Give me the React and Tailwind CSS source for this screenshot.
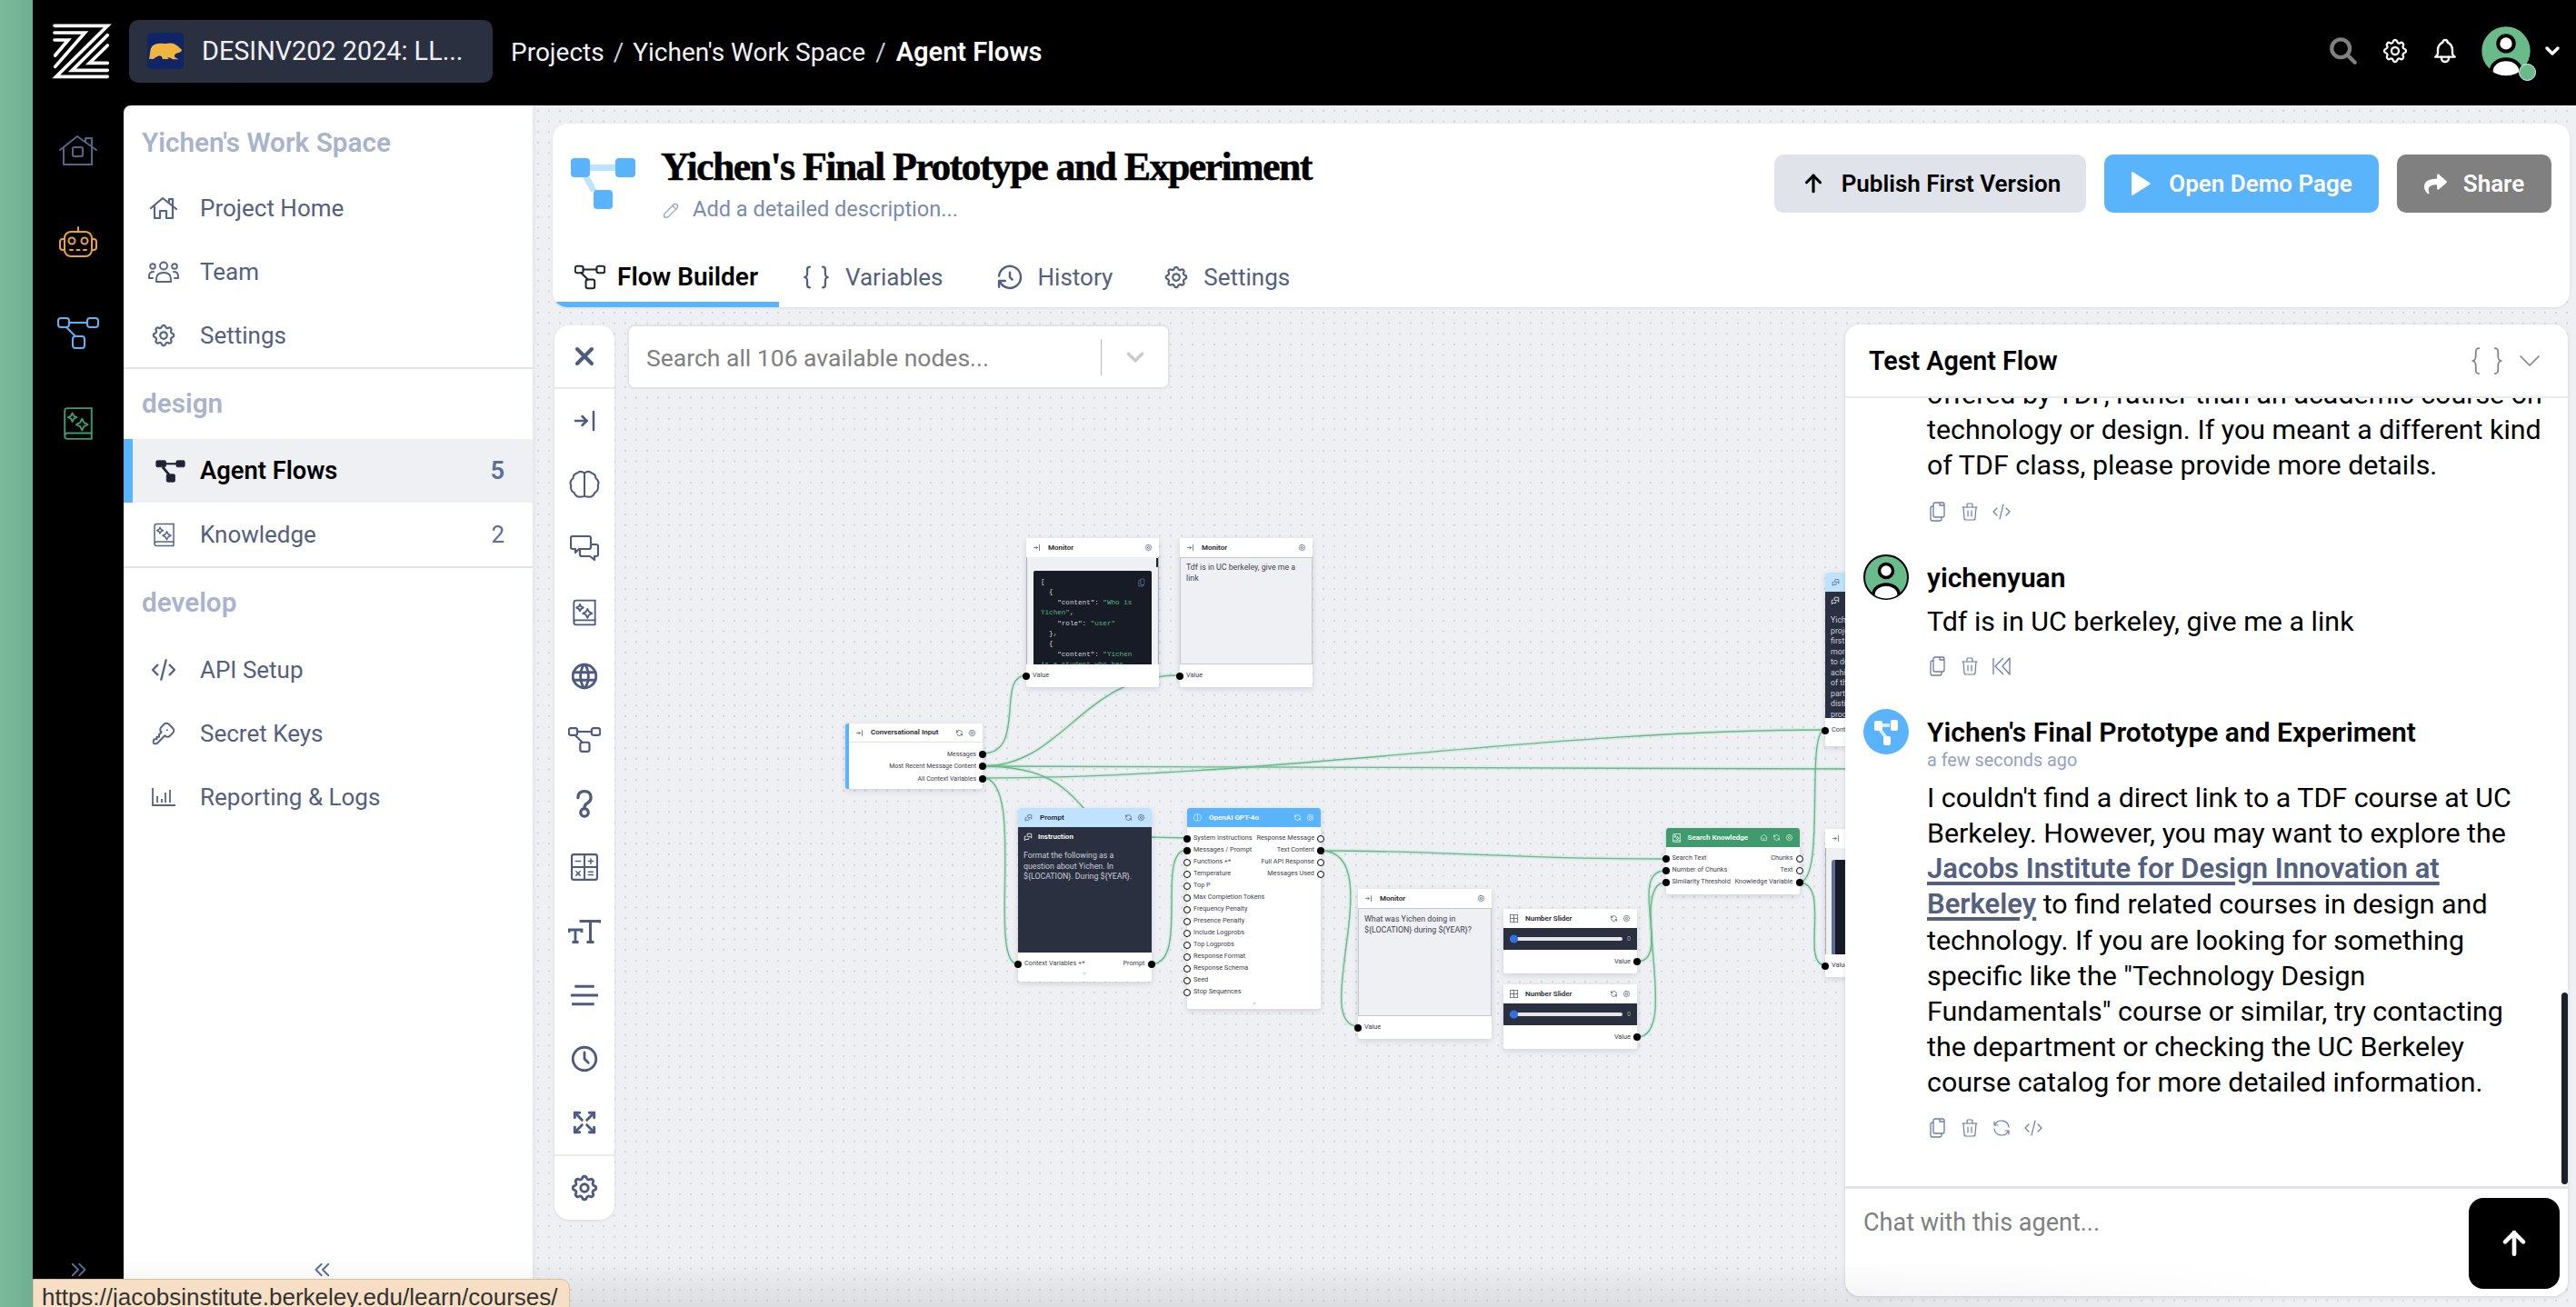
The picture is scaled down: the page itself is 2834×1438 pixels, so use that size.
import React from "react";
import { TbSettings, TbKey, TbCode, TbWorld, TbClock, TbArrowBarToRight, TbMessages, TbSearch, TbBell, TbHistory, TbBraces, TbPencil, TbArrowUp, TbRefresh, TbChevronDown, TbX, TbArrowsMaximize, TbSmartHome, TbTrash, TbChevronsLeft, TbChevronsRight, TbChevronsDown, TbChevronsUp } from "react-icons/tb";
import { FaShare } from "react-icons/fa";

const Logo = () => (
  <svg viewBox="0 0 240 240" className="w-[80px] h-[80px] shrink-0" fill="none" stroke="white" strokeWidth="11" strokeLinecap="round" strokeLinejoin="miter">
    <path d="M30 37H205L35 205H205" />
    <path d="M30 60H130L32 172" />
    <path d="M30 84H75L32 135" />
    <path d="M205 68L88 184H205" />
    <path d="M205 102L145 160H205" />
  </svg>
);
const Bear = () => (
  <svg viewBox="0 0 120 120" className="w-[40px] h-[40px] shrink-0 rounded-[5px] bg-[#0f2566]">
    <path fill="#f0b440" d="M6 86C10 74 8 58 14 48C20 36 40 34 56 36C66 36 78 32 88 36C96 40 104 46 114 56L112 62L104 66L96 68C90 72 88 76 92 82L104 88L84 88C76 82 70 82 66 82L72 87L50 87C50 80 46 76 40 76C32 78 24 84 20 87Z" />
  </svg>
);
const RailHome = () => (
  <svg viewBox="0 0 42 34" className="w-[42px] h-[34px]" fill="none" stroke="#56648a" strokeWidth="2" strokeLinejoin="round" strokeLinecap="round">
    <path d="M1 16L20 1L41 16" /><path d="M5 14V32H36V14" /><path d="M29 7V3H36V14" /><rect x="15" y="13" width="11" height="10" rx="1.5" />
  </svg>
);
const ProjectHome = () => (
  <svg viewBox="0 0 30 26" width="30" height="26" fill="none" stroke="#56648a" strokeWidth="2.200" strokeLinejoin="round" strokeLinecap="round">
    <path d="M1 13L14 2L29 14" /><path d="M5 11V24H11V16H18V24H25V11" /><path d="M21 6V3H25V10" />
  </svg>
);
const TeamIcon = () => (
  <svg viewBox="0 0 34 24" width="34" height="24" fill="none" stroke="#56648a" strokeWidth="1.900" strokeLinejoin="round" strokeLinecap="round">
    <circle cx="17" cy="5.500" r="4" /><circle cx="5" cy="6" r="2.800" /><circle cx="29" cy="6" r="2.800" />
    <path d="M9 23V20Q9 13 17 13Q25 13 25 20V23Z" /><path d="M6 12Q1 12 1 17V19H5" /><path d="M28 12Q33 12 33 17V19H29" />
  </svg>
);
const Robot = () => (
  <svg viewBox="0 0 42 34" className="w-[42px] h-[34px]" fill="none" stroke="#e9a23b" strokeWidth="2" strokeLinejoin="round" strokeLinecap="round">
    <path d="M21 1V6" /><rect x="6" y="6" width="30" height="27" rx="7" /><path d="M6 14H4Q1 14 1 17V23Q1 26 4 26H6" /><path d="M36 14H38Q41 14 41 17V23Q41 26 38 26H36" />
    <circle cx="14" cy="16" r="3.5" /><circle cx="28" cy="16" r="3.5" /><path d="M12 26H15M19.5 26H22.5M27 26H30" />
  </svg>
);
const Flow = ({ color = "#5ab4fb", w = 46, h = 35, sw = 2 }) => (
  <svg viewBox="0 0 46 35" width={w} height={h} fill="none" stroke={color} strokeWidth={sw} strokeLinejoin="round" strokeLinecap="round">
    <rect x="1" y="1" width="12" height="10" rx="3" /><rect x="33" y="1" width="12" height="10" rx="3" /><rect x="17" y="21" width="13" height="13" rx="3" />
    <path d="M13 6H33" /><path d="M10 11L20 21" />
  </svg>
);
const FlowSolid = () => (
  <svg viewBox="0 0 46 35" width="33" height="25" fill="#1f2430" stroke="#1f2430">
    <rect x="1" y="1" width="15" height="10" rx="2" /><rect x="32" y="1" width="13" height="10" rx="2" /><rect x="17" y="22" width="13" height="12" rx="2" />
    <path d="M13 6H33" strokeWidth="3" /><path d="M11 11L21 23" strokeWidth="4" />
  </svg>
);
const Book = ({ color = "#56648a", size = 34, sw = 2 }) => (
  <svg viewBox="0 0 32 36" width={size} height={size} fill="none" stroke={color} strokeWidth={sw} strokeLinejoin="round" strokeLinecap="round">
    <path d="M30 2H5Q2 2 2 5V31Q2 34 5 34H30V28H5Q2 28 2 31" /><path d="M30 2V28" />
    <path d="M10 7L11.5 10L14.5 11.5L11.5 13L10 16L8.500 13L5.5 11.500L8.5 10Z" /><path d="M20 13L22 17L26 19L22 21L20 25L18 21L14 19L18 17Z" />
  </svg>
);
const HeaderLogo = () => (
  <svg viewBox="0 0 71 56" width="71" height="56" className="shrink-0">
    <rect x="21" y="7" width="28" height="7" fill="#bfe3fc" /><path d="M13 21L21 21L29 36L22 37Z" fill="#bfe3fc" />
    <rect x="0" y="0" width="21" height="21" rx="4" fill="#5ab4fb" /><rect x="49" y="0" width="22" height="21" rx="4" fill="#5ab4fb" /><rect x="25" y="35" width="21" height="21" rx="4" fill="#5ab4fb" />
  </svg>
);
const Avatar = ({ w = 50, h = 50 }) => (
  <svg viewBox="0 0 50 50" width={w} height={h} className="shrink-0">
    <defs><clipPath id="av"><circle cx="25" cy="25" r="23.500" /></clipPath></defs>
    <circle cx="25" cy="25" r="24" fill="#69bb8a" stroke="black" strokeWidth="2" />
    <g clipPath="url(#av)">
      <ellipse cx="25" cy="44" rx="14" ry="11" fill="white" stroke="black" strokeWidth="3.500" />
      <circle cx="25" cy="18" r="7.500" fill="white" stroke="black" strokeWidth="3.500" />
    </g>
  </svg>
);
const BotAvatar = () => (
  <div className="w-[50px] h-[50px] shrink-0 rounded-full bg-[#5ab4fb] flex items-center justify-center">
    <svg viewBox="0 0 30 30" width="30" height="30">
      <rect x="9" y="6" width="10" height="4" fill="#d5ecfd" /><path d="M7 14L13 22L16 20L11 13Z" fill="#d5ecfd" />
      <rect x="2" y="3" width="9" height="11" rx="2" fill="white" /><rect x="20" y="2" width="8" height="12" rx="2" fill="white" /><rect x="12" y="20" width="8" height="10" rx="2" fill="white" />
    </svg>
  </div>
);
const CopyIcon = () => (
  <svg viewBox="0 0 20 24" width="20" height="24" fill="none" stroke="#6c7ca6" strokeWidth="1.300" strokeLinejoin="round">
    <path d="M7 2H15Q17 2 17 4V16Q17 18 15 18H7Q5 18 5 16V4Q5 2 7 2Z" /><path d="M5 6H4Q2 6 2 8V20Q2 22 4 22H12Q14 22 14 20V18" /><path d="M12 2V5H17" />
  </svg>
);
const Reverse = () => (
  <svg viewBox="0 0 24 24" width="24" height="24" fill="none" stroke="#6c7ca6" strokeWidth="1.300" strokeLinejoin="round">
    <path d="M3 3V21" /><path d="M14 3L5 12L14 21" /><path d="M21 3V21L13 12Z" />
  </svg>
);

const Question = () => (
  <svg viewBox="0 0 24 24" width="34" height="34" fill="none" stroke="#4d5b80" strokeWidth="2.300" strokeLinecap="round" strokeLinejoin="round">
    <path d="M7 7.500Q7 2.500 12 2.500Q17 2.500 17 7.500Q17 10 14 12Q12 13 12 15.500" /><circle cx="12" cy="19" r="3" />
  </svg>
);
const Calc = () => (
  <svg viewBox="0 0 28 28" width="30" height="30" fill="none" stroke="#4d5b80" strokeWidth="2" strokeLinecap="round">
    <rect x="1" y="1" width="26" height="26" rx="2" /><path d="M14 1V27M1 14H27" strokeWidth="1.800" />
    <path d="M5 8H10M18 8H23M20.500 5.500V10.500M5.500 18.500L9.500 22.500M9.500 18.500L5.500 22.500M18 19H23M18 22H23" strokeWidth="1.400" />
  </svg>
);
const TextSize = () => (
  <svg viewBox="0 0 36 26" width="36" height="26" fill="none" stroke="#4d5b80" strokeWidth="2.800">
    <path d="M14 3V1.500H35V3.500" /><path d="M24.500 2V25M20.500 24.500H28.500" strokeWidth="3" /><path d="M1 14V11H15V14" /><path d="M8 11V25M4.500 24.500H11.500" />
  </svg>
);
const AlignLines = () => (
  <svg viewBox="0 0 28 22" width="30" height="24" stroke="#4d5b80" strokeWidth="2.800">
    <path d="M4 2H24M0 11H28M1 20H24" />
  </svg>
);
const Brain = ({ size = 34, color = "#4d5b80", sw = 1.800 }) => (
  <svg viewBox="0 0 30 28" width={size} height={size} fill="none" stroke={color} strokeWidth={sw} strokeLinejoin="round">
    <path d="M15 2V26" /><path d="M15 3Q11 0 8 3Q4 4 4 8Q0 11 2 15Q1 20 5 22Q7 27 12 26Q14 26 15 25Q16 26 18 26Q23 27 25 22Q29 20 28 15Q30 11 26 8Q26 4 22 3Q19 0 15 3Z" />
  </svg>
);
const TwoChats = () => (
  <svg viewBox="0 0 32 28" width="32" height="28" fill="none" stroke="#4d5b80" strokeWidth="2.200" strokeLinejoin="round">
    <path d="M3 1H21Q23 1 23 3V13Q23 15 21 15H10L6 19V15H3Q1 15 1 13V3Q1 1 3 1Z" /><path d="M23 10H29Q31 10 31 12V21Q31 23 29 23H27V27L22 23H13Q11 23 11 21V15" />
  </svg>
);
const ReportIcon = () => (
  <svg viewBox="0 0 26 22" width="26" height="22" fill="none" stroke="#56648a" strokeWidth="1.800">
    <path d="M1 1V20H26" /><path d="M6 10V17M11 13V17M15 6V17M20 3V17" />
  </svg>
);
const Pencil = () => (<TbPencil size={23} color="#94a2c2" strokeWidth={1.300} />);

const nav1 = "h-[70px] flex items-center text-[26px] text-[#54607f] shrink-0";
const NavItem = ({ icon, label, count, active }) => (
  <div className={active ? "h-[70px] flex items-center text-[27.300px] bg-[#eff0f4] text-black font-semibold border-l-[10px] border-[#5ab4fb] shrink-0" : nav1}>
    <div className={active ? "w-[74px] pl-[8px] flex items-center justify-center" : "w-[84px] pl-[4px] flex items-center justify-center"}>{icon}</div>
    <span className="whitespace-nowrap">{label}</span>
    {count ? <span className={active ? "ml-auto pr-[31px] text-[#5c6d9a] font-semibold" : "ml-auto pr-[31px] text-[#5c6d9a]"}>{count}</span> : null}
  </div>
);
const SectionHead = ({ children, first }) => (
  <div className={first ? "h-[78px] pl-[20px] pt-[4px] flex items-center text-[29.700px] font-semibold text-[#a9b4cc] shrink-0 whitespace-nowrap" : "h-[77px] pl-[20px] flex items-center text-[29.700px] font-semibold text-[#a9b4cc] shrink-0"}>{children}</div>
);
const Divider = () => <div className="h-[2px] bg-[#e0e3ea] shrink-0" />;

const Tab = ({ icon, label, active, className }) => (
  <div className={`flex items-center h-[64px] whitespace-nowrap ${active ? "gap-[13px] text-[28px] font-semibold text-black" : "gap-[15px] text-[26px] text-[#54607f]"} ${className}`}>
    {icon}<span>{label}</span>
  </div>
);

const Dot = ({ hollow, side }) => (
  <span className={`absolute top-1/2 -translate-y-1/2 w-[8px] h-[8px] rounded-full ${side === "l" ? "-left-[4px]" : "-right-[4px]"} ${hollow ? "bg-white border border-black" : "bg-black"}`} />
);
const Row = ({ l, r, lh, rh }) => (
  <div className="relative h-[13px] flex items-center justify-between px-[7px] text-[7.300px] text-[#3d4250] whitespace-nowrap">
    {l ? <Dot side="l" hollow={lh} /> : null}<span>{l}</span><span>{r}</span>{r ? <Dot side="r" hollow={rh} /> : null}
  </div>
);
const NodeHead = ({ icon, title, actions = 1, className = "bg-white text-[#1f2430]", iconColor = "#4d5b80" }) => (
  <div className={`h-[21px] flex items-center gap-[6px] px-[7px] shrink-0 font-semibold text-[8px] whitespace-nowrap ${className}`}>
    <span className="w-[9px] flex items-center">{icon}</span>
    <span className="ml-[2px]">{title}</span>
    <span className="ml-auto flex items-center gap-[5px]">
      {actions > 2 ? <TbSmartHome size={9} color={iconColor} /> : null}
      {actions > 1 ? <TbRefresh size={9} color={iconColor} /> : null}
      <TbSettings size={9} color={iconColor} />
    </span>
  </div>
);
const InIcon = () => <TbArrowBarToRight size={9} color="#4d5b80" />;
const nodeBase = "absolute rounded-[3px] bg-white shadow-[0_2px_6px_rgba(40,50,80,0.16)] flex flex-col";
const Kw = ({ children }) => <span className="text-[#5ab57e]">{children}</span>;

const CodeBlock = () => (
  <div className="relative flex-1 mx-[7px] mt-[15px] rounded-t-[2px] bg-[#161b26] px-[8px] pt-[7px] overflow-hidden [font-family:'Liberation_Mono',monospace] text-[7.600px] leading-[11.400px] text-[#d4d6dc] whitespace-pre">
    <div className="absolute right-[7px] top-[8px]"><svg viewBox="0 0 20 24" width="8" height="10" fill="none" stroke="#5c6d9a" strokeWidth="2"><path d="M7 2H17V18H7Z" /><path d="M5 6H2V22H14V18" /></svg></div>
    {"[\n  {\n    \"content\": "}<Kw>{"\"Who is\nYichen\""}</Kw>{",\n    \"role\": "}<Kw>{"\"user\""}</Kw>{"\n  },\n  {\n    \"content\": "}<Kw>{"\"Yichen\nis a student who has"}</Kw>
  </div>
);

const Slider = () => (
  <div className="h-[24px] bg-[#2a3040] flex items-center px-[7px] gap-[5px] shrink-0">
    <div className="relative flex-1 h-[4px] rounded-full bg-[#e6e6e8]">
      <span className="absolute left-0 top-1/2 -translate-y-1/2 w-[9px] h-[9px] rounded-full bg-[#2f6fe8]" />
    </div>
    <span className="text-[7.300px] text-[#9aa0ad]">0</span>
  </div>
);

const E = ({ d }) => (
  <g fill="none" stroke="#65bb88">
    <path d={d} strokeWidth="4.500" opacity="0.13" />
    <path d={d} strokeWidth="1.400" />
  </g>
);

const gpt = [
  ["System Instructions", "Response Message", false, true],
  ["Messages / Prompt", "Text Content", false, false],
  ["Functions +*", "Full API Response", true, true],
  ["Temperature", "Messages Used", true, true],
  ["Top P"], ["Max Completion Tokens"], ["Frequency Penalty"], ["Presence Penalty"], ["Include Logprobs"], ["Top Logprobs"], ["Response Format"], ["Response Schema"], ["Seed"], ["Stop Sequences"],
];

const tools = [
  <TbArrowBarToRight size={30} color="#4d5b80" strokeWidth={2} />,
  <Brain />,
  <TwoChats />,
  <Book color="#4d5b80" size={30} sw={2.200} />,
  <TbWorld size={34} color="#4d5b80" strokeWidth={2} />,
  <Flow color="#4d5b80" w={36} h={28} sw={2.800} />,
  <Question />,
  <Calc />,
  <TextSize />,
  <AlignLines />,
  <TbClock size={34} color="#4d5b80" strokeWidth={2} />,
  <TbArrowsMaximize size={32} color="#4d5b80" strokeWidth={2.200} />,
];

const ChatLine = ({ children }) => <div className="whitespace-nowrap h-[39.200px] leading-[39.200px]">{children}</div>;
const Actions = ({ children }) => <div className="h-[30px] flex items-center gap-[11px] text-[#6c7ca6]">{children}</div>;
const Act = ({ children }) => <span className="w-[24px] flex items-center justify-center">{children}</span>;
const Link = ({ children }) => <span className="text-[31px] font-semibold text-[#54607f] underline decoration-[#54607f] decoration-[4px] underline-offset-[4px]">{children}</span>;

export default function App() {
  return (
    <div className="relative w-[2834px] h-[1438px] flex overflow-hidden bg-black [font-family:'Roboto',sans-serif]">
      <div className="w-[36px] shrink-0 bg-gradient-to-r from-[#7cba9c] to-[#6fae90]" />
      <div className="flex-1 flex flex-col min-w-0">
        {/* top bar */}
        <header className="h-[116px] shrink-0 bg-black flex items-center pl-[14px] pr-[14px] pb-[4px] text-white text-[28px]">
          <Logo />
          <div className="ml-[12px] w-[400px] h-[69px] rounded-[10px] bg-[#2a3040] flex items-center pl-[20px] gap-[20px]">
            <Bear />
            <span className="pt-[2px] text-[28.800px] whitespace-nowrap text-[#eef0f4]">DESINV202 2024: LL...</span>
          </div>
          <div className="ml-[20px] pt-[3px] flex items-center whitespace-nowrap text-[#f2f3f6]">
            <span>Projects</span><span className="mx-[10px] text-[#c9ced9]">/</span><span>Yichen's Work Space</span><span className="mx-[11px] text-[#c9ced9]">/</span><span className="text-[29px] font-semibold text-white">Agent Flows</span>
          </div>
          <div className="ml-auto flex items-center">
            <TbSearch size={34} color="#808080" strokeWidth={3} />
            <span className="ml-[24px]"><TbSettings size={32} color="white" strokeWidth={1.700} /></span>
            <span className="ml-[23px]"><TbBell size={32} color="white" strokeWidth={1.800} /></span>
            <div className="relative ml-[22px]">
              <Avatar w={58} h={58} />
              <span className="absolute -right-[4px] bottom-[-4px] w-[19px] h-[19px] rounded-full bg-[#69bb8a] border border-[#e8f3ec]" />
            </div>
            <span className="ml-[10px]"><TbChevronDown size={24} color="white" strokeWidth={3.500} /></span>
          </div>
        </header>

        <div className="flex-1 flex min-h-0">
          {/* rail */}
          <nav className="relative w-[100px] shrink-0 bg-black flex flex-col items-center">
            <div className="h-[100px] w-full flex items-center justify-center"><RailHome /></div>
            <div className="h-[100px] w-full flex items-center justify-center"><Robot /></div>
            <div className="h-[100px] w-full flex items-center justify-center"><Flow /></div>
            <div className="h-[100px] w-full flex items-center justify-center"><Book color="#3f9b6d" size={38} sw={1.800} /></div>
            <div className="mt-auto mb-[26px]"><TbChevronsRight size={30} color="#5c6d9a" strokeWidth={1.500} /></div>
          </nav>

          {/* sidebar */}
          <aside className="relative w-[450px] shrink-0 bg-white rounded-tl-[8px] flex flex-col shadow-[2px_0_4px_rgba(40,50,80,0.06)] z-10">
            <SectionHead first>Yichen's Work Space</SectionHead>
            <NavItem icon={<ProjectHome />} label="Project Home" />
            <NavItem icon={<TeamIcon />} label="Team" />
            <NavItem icon={<TbSettings size={30} color="#56648a" strokeWidth={1.800} />} label="Settings" />
            <Divider />
            <SectionHead>design</SectionHead>
            <NavItem active icon={<FlowSolid />} label="Agent Flows" count="5" />
            <NavItem icon={<Book size={27} sw={2} />} label="Knowledge" count="2" />
            <Divider />
            <SectionHead>develop</SectionHead>
            <NavItem icon={<TbCode size={32} color="#56648a" strokeWidth={1.800} />} label="API Setup" />
            <NavItem icon={<TbKey size={30} color="#56648a" strokeWidth={1.600} />} label="Secret Keys" />
            <NavItem icon={<ReportIcon />} label="Reporting & Logs" />
            <div className="mt-auto mb-[26px] self-center pr-[12px]"><TbChevronsLeft size={30} color="#5c6d9a" strokeWidth={1.500} /></div>
          </aside>

          {/* main */}
          <main className="relative flex-1 min-w-0 bg-[#eff0f4] bg-[radial-gradient(#d3d6e0_0.8px,transparent_0.9px)] bg-[length:12px_11.700px]">
            {/* canvas */}
            <div className="absolute inset-0">
              <svg className="absolute left-0 top-0" width="2248" height="1322" viewBox="586 116 2248 1322">
                <E d="M1081 829C1130 829 1095 743 1129 743" />
                <E d="M1081 843C1170 843 1190 743 1297 743" />
                <E d="M1081 843C1500 843 1800 846 2030 846" />
                <E d="M1081 856C1400 856 1700 803 2008 803" />
                <E d="M1081 843C1170 843 1180 880 1220 920L1306 922" />
                <E d="M1081 856C1130 856 1085 1061 1120 1061" />
                <E d="M1266 1061C1310 1061 1270 935 1306 935" />
                <E d="M1453 936C1530 936 1440 1129 1494 1129" />
                <E d="M1453 936C1600 936 1650 945 1832 945" />
                <E d="M1801 1058C1840 1058 1790 958 1832 958" />
                <E d="M1801 1141C1850 1141 1790 971 1832 971" />
                <E d="M1979 971C2010 971 1985 803 2008 803" />
                <E d="M1979 971C2015 971 1980 1062 2008 1062" />
              </svg>

              {/* Monitor 1 */}
              <div className={`${nodeBase} left-[543px] top-[476px] w-[146px] h-[164px]`}>
                <NodeHead icon={<InIcon />} title="Monitor" />
                <div className="relative flex-1 min-h-0 flex flex-col bg-[#eff0f4] border-x border-[#a9adb6] overflow-hidden">
                  <span className="absolute right-0 top-[1px] w-[2px] h-[10px] bg-[#1f2430]" />
                  <CodeBlock />
                </div>
                <div className="relative h-[25px] flex items-center px-[7px] text-[7.300px] text-[#3d4250] shrink-0"><Dot side="l" /><span>Value</span></div>
              </div>
              {/* Monitor 2 */}
              <div className={`${nodeBase} left-[712px] top-[476px] w-[146px] h-[164px]`}>
                <NodeHead icon={<InIcon />} title="Monitor" />
                <div className="flex-1 min-h-0 bg-[#eff0f4] border border-[#c5c8d0] px-[6px] py-[5px] text-[8.800px] leading-[11.500px] text-[#3d4250]"><div className="whitespace-nowrap">Tdf is in UC berkeley, give me a</div><div>link</div></div>
                <div className="relative h-[25px] flex items-center px-[7px] text-[7.300px] text-[#3d4250] shrink-0"><Dot side="l" /><span>Value</span></div>
              </div>
              {/* Conversational */}
              <div className={`${nodeBase} left-[344px] top-[680px] w-[151px] h-[72px] border-l-[4px] border-[#5ab4fb]`}>
                <NodeHead icon={<InIcon />} title="Conversational Input" actions={2} className="bg-white text-[#1f2430] border-b border-[#e0e3ea]" />
                <div className="pt-[6px] flex flex-col">
                  {["Messages", "Most Recent Message Content", "All Context Variables"].map((t) => (
                    <div key={t} className="relative h-[13.500px] flex items-center justify-end px-[7px] text-[7px] text-[#3d4250] whitespace-nowrap">{t}<Dot side="r" /></div>
                  ))}
                </div>
              </div>
              {/* Prompt */}
              <div className={`${nodeBase} left-[534px] top-[773px] w-[146.500px] h-[191px]`}>
                <NodeHead icon={<TbMessages size={10} color="#4d5b80" />} title="Prompt" actions={2} className="bg-[#bfe3fc] text-[#1f2430] rounded-t-[3px]" />
                <div className="h-[138px] bg-[#2a3040] px-[6px] pt-[5px] text-[8.800px] leading-[11.600px] text-[#c9cdd6] shrink-0">
                  <div className="flex items-center gap-[4px] font-semibold text-white text-[8px] h-[12px] mb-[9px]"><TbMessages size={10} color="white" /><span className="ml-[2px]">Instruction</span></div>
                  <div>Format the following as a</div><div>question about Yichen. In</div><div className="whitespace-nowrap">{"${LOCATION}. During ${YEAR}."}</div>
                </div>
                <div className="pt-[6px]"><Row l="Context Variables +*" r="Prompt" /></div>
                <div className="flex justify-center mt-[1px]"><TbChevronsDown size={6} color="#94a2c2" /></div>
              </div>
              {/* GPT */}
              <div className={`${nodeBase} left-[720px] top-[773px] w-[147px] h-[221px]`}>
                <NodeHead icon={<Brain size={9} color="white" sw={2} />} title="OpenAI GPT-4o" actions={2} iconColor="#e6f3fe" className="bg-[#5ab4fb] text-white rounded-t-[3px]" />
                <div className="pt-[6px] flex flex-col">
                  {gpt.map((g) => (<Row key={g[0]} l={g[0]} r={g[1]} lh={g[2] !== false} rh={g[3]} />))}
                </div>
                <div className="flex justify-center mt-[3px]"><TbChevronsUp size={6} color="#94a2c2" /></div>
              </div>
              {/* Monitor 3 */}
              <div className={`${nodeBase} left-[908px] top-[862px] w-[147px] h-[165px]`}>
                <NodeHead icon={<InIcon />} title="Monitor" />
                <div className="flex-1 min-h-0 bg-[#eff0f4] border border-[#c5c8d0] px-[6px] py-[5px] text-[8.800px] leading-[12px] text-[#3d4250]"><div>What was Yichen doing in</div><div className="whitespace-nowrap">{"${LOCATION} during ${YEAR}?"}</div></div>
                <div className="relative h-[25px] flex items-center px-[7px] text-[7.300px] text-[#3d4250] shrink-0"><Dot side="l" /><span>Value</span></div>
              </div>
              {/* Sliders */}
              <div className={`${nodeBase} left-[1068px] top-[884px] w-[147px] h-[71px]`}>
                <NodeHead icon={<Calc2 />} title="Number Slider" actions={2} />
                <Slider />
                <div className="relative flex-1 flex items-center justify-end px-[7px] text-[7.300px] text-[#3d4250]">Value<Dot side="r" /></div>
              </div>
              <div className={`${nodeBase} left-[1068px] top-[967px] w-[147px] h-[71px]`}>
                <NodeHead icon={<Calc2 />} title="Number Slider" actions={2} />
                <Slider />
                <div className="relative flex-1 flex items-center justify-end px-[7px] text-[7.300px] text-[#3d4250]">Value<Dot side="r" /></div>
              </div>
              {/* Search Knowledge */}
              <div className={`${nodeBase} left-[1246.500px] top-[795px] w-[147px] h-[73px]`}>
                <NodeHead icon={<Book color="white" size={10} sw={2.500} />} title="Search Knowledge" actions={3} iconColor="#d7ecdf" className="bg-[#3f9b6d] text-white rounded-t-[3px]" />
                <div className="pt-[6px] flex flex-col">
                  <Row l="Search Text" r="Chunks" rh />
                  <Row l="Number of Chunks" r="Text" rh />
                  <Row l="Similarity Threshold" r="Knowledge Variable" />
                </div>
              </div>
              {/* clipped prompt */}
              <div className={`${nodeBase} left-[1422px] top-[514px] w-[146px] h-[191px]`}>
                <NodeHead icon={<TbMessages size={10} color="#4d5b80" />} title="Prompt" actions={2} className="bg-[#bfe3fc] text-[#1f2430] rounded-t-[3px]" />
                <div className="h-[139px] bg-[#2a3040] px-[6px] pt-[5px] text-[8.800px] leading-[11.500px] text-[#c9cdd6] shrink-0 overflow-hidden">
                  <div className="h-[12px] mb-[9px]"><TbMessages size={10} color="white" /></div>
                  <div>Yichen</div><div>project</div><div>first</div><div>more</div><div>to do</div><div>achieve</div><div>of the</div><div>part</div><div>distinct</div><div>process</div>
                </div>
                <div className="pt-[7px]"><Row l="Context Variables +*" /></div>
              </div>
              {/* clipped monitor */}
              <div className={`${nodeBase} left-[1422px] top-[796px] w-[146px] h-[163px]`}>
                <NodeHead icon={<InIcon />} title="Monitor" />
                <div className="relative flex-1 min-h-0 flex flex-col bg-[#eff0f4] border-x border-[#a9adb6] overflow-hidden">
                  <div className="flex-1 mx-[6px] mt-[13px] rounded-tl-[3px] bg-[#161b26] border-l-[4px] border-[#5c6d9a]" />
                </div>
                <div className="relative h-[25px] flex items-center px-[7px] text-[7.300px] text-[#3d4250] shrink-0"><Dot side="l" /><span>Value</span></div>
              </div>
            </div>

            {/* header card */}
            <section className="relative z-10 mt-[20px] ml-[22px] mr-[7px] h-[202px] rounded-[16px] bg-white overflow-hidden shadow-[0_1px_3px_rgba(40,50,80,0.1)]">
              <div className="h-[138px] flex items-start">
                <div className="ml-[20px] mt-[38px]"><HeaderLogo /></div>
                <div className="ml-[28px] mt-[23px]">
                  <h1 className="h-[50px] leading-[50px] text-[44px] tracking-[-1.640px] font-bold text-black whitespace-nowrap [-webkit-text-stroke:0.5px_black] [font-family:'Liberation_Serif',serif]">Yichen's Final Prototype and Experiment</h1>
                  <div className="mt-[7px] h-[30px] flex items-center gap-[12px] text-[23.600px] text-[#7b8bb0] whitespace-nowrap"><Pencil /><span>Add a detailed description...</span></div>
                </div>
                <div className="ml-auto mr-[20px] mt-[34px] flex items-center gap-[20px] text-[26px] font-semibold">
                  <div className="w-[343px] h-[64px] rounded-[10px] bg-[#e0e3ea] flex items-center gap-[16px] justify-center text-black whitespace-nowrap"><TbArrowUp size={30} strokeWidth={2.500} /><span>Publish First Version</span></div>
                  <div className="w-[302px] h-[64px] rounded-[10px] bg-[#5ab4fb] flex items-center gap-[20px] justify-center text-white whitespace-nowrap">
                    <svg viewBox="0 0 22 26" width="22" height="26" fill="white"><path d="M1 1Q1 0 2 0L21 12Q22 13 21 14L2 26Q1 26 1 25Z" /></svg><span>Open Demo Page</span>
                  </div>
                  <div className="w-[170px] h-[64px] rounded-[10px] bg-[#808080] flex items-center gap-[18px] justify-center text-white whitespace-nowrap"><FaShare size={25} /><span>Share</span></div>
                </div>
              </div>
              <div className="flex items-center -mt-[1px]">
                <Tab active className="w-[249px] pl-[24px]" icon={<Flow color="#1f2430" w={34} h={28} sw={2.800} />} label="Flow Builder" />
                <Tab className="ml-[24px]" icon={<TbBraces size={34} color="#54607f" strokeWidth={1.600} />} label="Variables" />
                <Tab className="ml-[57px]" icon={<TbHistory size={32} color="#54607f" strokeWidth={1.800} />} label="History" />
                <Tab className="ml-[55px]" icon={<TbSettings size={30} color="#54607f" strokeWidth={1.800} />} label="Settings" />
              </div>
              <div className="absolute left-0 bottom-0 w-[249px] h-[6px] bg-[#5ab4fb]" />
            </section>

            {/* toolbar */}
            <div className="absolute z-10 left-[24px] top-[242px] w-[66px] h-[984px] rounded-[16px] bg-white shadow-[0_1px_3px_rgba(40,50,80,0.12)] flex flex-col items-center">
              <div className="w-full h-[70px] flex items-center justify-center border-b-2 border-[#e8eaef] shrink-0"><TbX size={32} color="#4d5b80" strokeWidth={3} /></div>
              {tools.map((t, i) => (<div key={i} className="w-full h-[70.200px] flex items-center justify-center shrink-0">{t}</div>))}
              <div className="w-full flex-1 flex items-center justify-center border-t-2 border-[#e8eaef]"><TbSettings size={34} color="#4d5b80" strokeWidth={2} /></div>
            </div>

            {/* search */}
            <div className="absolute z-10 left-[104px] top-[241px] w-[597px] h-[71px] rounded-[8px] bg-white border-2 border-[#e0e3ea] flex items-center pl-[19px] text-[26.500px] text-[#808080]">
              <span className="pt-[3px] whitespace-nowrap">Search all 106 available nodes...</span>
              <span className="ml-auto w-[1px] h-[40px] bg-[#b8b8b8]" />
              <span className="w-[73px] flex justify-center"><TbChevronDown size={30} color="#cccccc" strokeWidth={3} /></span>
            </div>

            {/* chat */}
            <section className="absolute z-20 left-[1444px] top-[241px] w-[795px] h-[1069px] rounded-[16px] bg-white flex flex-col overflow-hidden shadow-[0_1px_4px_rgba(40,50,80,0.15)]">
              <div className="h-[81px] shrink-0 flex items-center pl-[26px] pr-[22px] border-b-2 border-[#e8eaef] text-[28.700px] font-semibold text-black">
                <span className="pt-[3px]">Test Agent Flow</span>
                <span className="ml-auto flex items-center gap-[6px]"><TbBraces size={42} color="#808080" strokeWidth={1} /><TbChevronDown size={40} color="#808080" strokeWidth={1} /></span>
              </div>
              <div className="relative flex-1 min-h-0 overflow-hidden text-[30.400px] text-black">
                <div className="pl-[90px] -mt-[24px]">
                  <ChatLine>offered by TDF, rather than an academic course on</ChatLine>
                  <ChatLine>technology or design. If you meant a different kind</ChatLine>
                  <ChatLine>of TDF class, please provide more details.</ChatLine>
                  <div className="mt-[16px]"><Actions><Act><CopyIcon /></Act><Act><TbTrash size={24} strokeWidth={1.200} /></Act><Act><TbCode size={24} strokeWidth={1.200} /></Act></Actions></div>
                </div>
                <div className="mt-[32px] flex pl-[20px] gap-[20px]">
                  <Avatar />
                  <div>
                    <div className="pt-[11px] h-[41px] leading-[30px] text-[30px] font-semibold whitespace-nowrap">yichenyuan</div>
                    <div className="mt-[13px]"><ChatLine>Tdf is in UC berkeley, give me a link</ChatLine></div>
                    <div className="mt-[15px]"><Actions><Act><CopyIcon /></Act><Act><TbTrash size={24} strokeWidth={1.200} /></Act><Act><Reverse /></Act></Actions></div>
                  </div>
                </div>
                <div className="mt-[32px] flex pl-[20px] gap-[20px]">
                  <BotAvatar />
                  <div>
                    <div className="pt-[11px] h-[41px] leading-[30px] text-[30px] font-semibold whitespace-nowrap">Yichen's Final Prototype and Experiment</div>
                    <div className="mt-[4px] h-[24px] leading-[24px] text-[19.800px] text-[#94a2c2] whitespace-nowrap">a few seconds ago</div>
                    <div className="mt-[9px]">
                      <ChatLine>I couldn't find a direct link to a TDF course at UC</ChatLine>
                      <ChatLine>Berkeley. However, you may want to explore the</ChatLine>
                      <ChatLine><Link>Jacobs Institute for Design Innovation at</Link></ChatLine>
                      <ChatLine><Link>Berkeley</Link> to find related courses in design and</ChatLine>
                      <ChatLine>technology. If you are looking for something</ChatLine>
                      <ChatLine>specific like the "Technology Design</ChatLine>
                      <ChatLine>Fundamentals" course or similar, try contacting</ChatLine>
                      <ChatLine>the department or checking the UC Berkeley</ChatLine>
                      <ChatLine>course catalog for more detailed information.</ChatLine>
                    </div>
                    <div className="mt-[16px]"><Actions><Act><CopyIcon /></Act><Act><TbTrash size={24} strokeWidth={1.200} /></Act><Act><TbRefresh size={24} strokeWidth={1.200} /></Act><Act><TbCode size={24} strokeWidth={1.200} /></Act></Actions></div>
                  </div>
                </div>
                <div className="absolute right-0 bottom-[2px] w-[7px] h-[211px] rounded-full bg-[#1a1f2a]" />
              </div>
              <div className="h-[121px] shrink-0 border-t-[3px] border-[#e0e3ea] flex items-start pl-[20px] pr-[9px] pt-[10px]">
                <span className="mt-[7px] text-[27px] text-[#808080] whitespace-nowrap">Chat with this agent...</span>
                <div className="ml-auto w-[100px] h-[100px] rounded-[16px] bg-black flex items-center justify-center"><TbArrowUp size={40} color="white" strokeWidth={2.800} /></div>
              </div>
            </section>
          </main>
        </div>
      </div>

      {/* page-bottom shade */}
      <div className="absolute z-30 left-[36px] bottom-0 w-[2500px] h-[52px] pointer-events-none bg-gradient-to-t from-[#00000014] to-transparent [mask-image:linear-gradient(to_right,black_70%,transparent)]" />
      {/* link status tooltip */}
      <div className="absolute z-40 left-[36px] top-[1407px] w-[591px] h-[40px] rounded-tr-[10px] bg-[#f6dfc4] border border-[#dcbf9c] pl-[9px] text-[26px] leading-[38px] text-[#333] whitespace-nowrap [font-family:'Liberation_Sans',sans-serif]">https://jacobsinstitute.berkeley.edu/learn/courses/</div>
    </div>
  );
}

function Calc2() {
  return (
    <svg viewBox="0 0 28 28" width="9" height="9" fill="none" stroke="#4d5b80" strokeWidth="2.500"><rect x="1" y="1" width="26" height="26" /><path d="M14 1V27M1 14H27" /></svg>
  );
}
